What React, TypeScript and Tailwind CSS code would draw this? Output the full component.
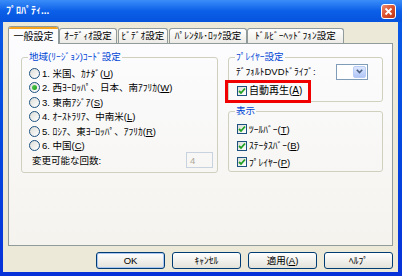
import React from "react";

function Radio({ checked }: { checked?: boolean }) {
  return (
    <span className="flex h-[11px] w-[11px] shrink-0 items-center justify-center rounded-full border border-[#1C5180] bg-gradient-to-br from-[#DCDCD7] to-white">
      {checked && <span className="h-[5px] w-[5px] rounded-full bg-gradient-to-br from-[#55D051] to-[#1A9B1A]" />}
    </span>
  );
}

function Check() {
  return (
    <span className="flex h-[10px] w-[10px] shrink-0 items-center justify-center border border-[#1C5180] bg-gradient-to-br from-[#DCDCD7] to-white">
      <svg width="8" height="8" viewBox="0 0 8 8">
        <path d="M1 4 L3 6 L7 1.5" fill="none" stroke="#21A121" strokeWidth="1.8" />
      </svg>
    </span>
  );
}

function Btn({ children, primary }: { children: React.ReactNode; primary?: boolean }) {
  return (
    <div
      className={
        primary
          ? "flex h-[17px] w-[69px] items-center justify-center rounded-[3px] border border-[#003C74] bg-gradient-to-b from-white to-[#E3E2DA] shadow-[inset_0_0_0_1px_#A9C6F3]"
          : "flex h-[17px] w-[69px] items-center justify-center rounded-[3px] border border-[#003C74] bg-gradient-to-b from-white to-[#E3E2DA]"
      }
    >
      {children}
    </div>
  );
}

export default function App() {
  const regions = [
    { n: "1. 米国、ｶﾅﾀﾞ(", k: "U", c: false },
    { n: "2. 西ﾖｰﾛｯﾊﾟ、日本、南ｱﾌﾘｶ(", k: "W", c: true },
    { n: "3. 東南ｱｼﾞｱ(", k: "S", c: false },
    { n: "4. ｵｰｽﾄﾗﾘｱ、中南米(", k: "L", c: false },
    { n: "5. ﾛｼｱ、東ﾖｰﾛｯﾊﾟ、ｱﾌﾘｶ(", k: "R", c: false },
    { n: "6. 中国(", k: "C", c: false },
  ];

  const views = [
    { n: "ﾂｰﾙﾊﾞｰ(", k: "T" },
    { n: "ｽﾃｰﾀｽﾊﾞｰ(", k: "B" },
    { n: "ﾌﾟﾚｲﾔｰ(", k: "P" },
  ];

  return (
    <div className="flex h-[276px] w-[402px] flex-col overflow-hidden bg-gradient-to-b from-[#0A5CE6] to-[#0831D9] font-['Liberation_Sans','Noto_Sans_CJK_JP',sans-serif] text-[9.5px] leading-none text-black">
      {/* title bar */}
      <div className="flex h-[22px] shrink-0 items-center justify-between bg-gradient-to-b from-[#3A8DF8] via-[#0B5FE8] to-[#0753DD] pl-[6px] pr-[6px]">
        <span className="text-[10px] font-bold text-white">ﾌﾟﾛﾊﾟﾃｨ...</span>
        <div className="flex h-[15px] w-[15px] items-center justify-center rounded-[3px] border border-white bg-gradient-to-br from-[#EE8A6E] via-[#D9502C] to-[#BF3412]">
          <svg width="9" height="9" viewBox="0 0 9 9">
            <path d="M1.5 1.5 L7.5 7.5 M7.5 1.5 L1.5 7.5" stroke="white" strokeWidth="1.8" />
          </svg>
        </div>
      </div>

      {/* body */}
      <div className="mb-[4px] ml-[3px] mr-[4px] flex flex-1 flex-col bg-[#ECE9D8] px-[5px] pt-[4px]">
        {/* tabs */}
        <div className="relative z-10 flex h-[17px] items-end">
          <div className="-mb-px flex h-[18px] w-[51px] flex-col overflow-hidden rounded-t-[3px] border border-b-0 border-[#919B9C] bg-[#FCFCFE]">
            <div className="h-[2px] bg-[#F4A31F]" />
            <div className="flex flex-1 items-center justify-center text-[10px]">一般設定</div>
          </div>
          <div className="flex h-[15px] w-[58px] items-center justify-center rounded-t-[3px] border border-b-0 border-[#919B9C] bg-gradient-to-b from-white to-[#ECEBE6]">ｵｰﾃﾞｨｵ設定</div>
          <div className="ml-[1px] flex h-[15px] w-[50px] items-center justify-center rounded-t-[3px] border border-b-0 border-[#919B9C] bg-gradient-to-b from-white to-[#ECEBE6]">ﾋﾞﾃﾞｵ設定</div>
          <div className="ml-[1px] flex h-[15px] w-[78px] items-center justify-center rounded-t-[3px] border border-b-0 border-[#919B9C] bg-gradient-to-b from-white to-[#ECEBE6]">ﾊﾟﾚﾝﾀﾙ･ﾛｯｸ設定</div>
          <div className="flex h-[15px] w-[97px] items-center justify-center rounded-t-[3px] border border-b-0 border-[#919B9C] bg-gradient-to-b from-white to-[#ECEBE6]">ﾄﾞﾙﾋﾞｰﾍｯﾄﾞﾌｫﾝ設定</div>
        </div>

        {/* panel */}
        <div className="flex h-[203px] shrink-0 gap-[10px] border border-[#919B9C] bg-gradient-to-b from-[#FCFCFE] to-[#F4F3EE] pl-[12px] pr-[10px] pt-[7px]">
          {/* region */}
          <fieldset className="h-[122px] w-[197px] shrink-0 rounded-[3px] border border-[#D0D0BF]">
            <legend className="ml-[6px] px-[1px] leading-[12px] text-[#0046D5]">地域(ﾘｰｼﾞｮﾝ)ｺｰﾄﾞ設定</legend>
            <div className="flex flex-col pl-[7px] pr-[4px] pt-[3px]">
              {regions.map((r) => (
                <div key={r.k} className="flex h-[14.5px] items-center gap-[2px]">
                  <Radio checked={r.c} />
                  <span>
                    {r.n}
                    <u>{r.k}</u>)
                  </span>
                </div>
              ))}
              <div className="flex h-[14.5px] items-center justify-between pl-[3px]">
                <span>変更可能な回数:</span>
                <div className="flex h-[16px] w-[27px] items-center border border-[#C9D3E0] pl-[3px] text-[#ACA899]">4</div>
              </div>
            </div>
          </fieldset>

          {/* right column */}
          <div className="flex w-[155px] shrink-0 flex-col gap-[3px]">
            <fieldset className="h-[51px] rounded-[3px] border border-[#D0D0BF]">
              <legend className="ml-[6px] px-[1px] leading-[12px] text-[#0046D5]">ﾌﾟﾚｲﾔｰ設定</legend>
              <div className="flex h-[16px] items-center justify-between pl-[7px] pr-[14px] pt-[1px]">
                <span>ﾃﾞﾌｫﾙﾄDVDﾄﾞﾗｲﾌﾞ:</span>
                <div className="flex h-[16px] w-[32px] justify-end border border-[#7F9DB9] bg-white p-[1px]">
                  <div className="flex w-[13px] items-center justify-center rounded-[2px] border border-[#B9CCF6] bg-gradient-to-b from-[#DDE7FE] to-[#B0C6F5]">
                    <svg width="7" height="5" viewBox="0 0 7 5">
                      <path d="M0.8 0.8 L3.5 3.6 L6.2 0.8" fill="none" stroke="#4D6185" strokeWidth="1.6" />
                    </svg>
                  </div>
                </div>
              </div>
              <div className="relative mt-[5px] flex h-[14px] items-center gap-[2px] pl-[8px]">
                <Check />
                <span className="text-[10px]">
                  自動再生(<u>A</u>)
                </span>
                <span className="absolute -left-[4px] -top-[4px] h-[23px] w-[86px] border-[3px] border-[#F00000]" />
              </div>
            </fieldset>

            <fieldset className="h-[67px] rounded-[3px] border border-[#D0D0BF]">
              <legend className="ml-[6px] px-[1px] leading-[12px] text-[#0046D5]">表示</legend>
              <div className="flex flex-col pl-[8px] pt-[4px]">
                {views.map((v) => (
                  <div key={v.k} className="flex h-[16.5px] items-center gap-[2px]">
                    <Check />
                    <span>
                      {v.n}
                      <u>{v.k}</u>)
                    </span>
                  </div>
                ))}
              </div>
            </fieldset>
          </div>
        </div>

        {/* buttons */}
        <div className="mt-[6px] flex justify-end gap-[7px]">
          <Btn primary>OK</Btn>
          <Btn>ｷｬﾝｾﾙ</Btn>
          <Btn>
            <span>
              適用(<u>A</u>)
            </span>
          </Btn>
          <Btn>ﾍﾙﾌﾟ</Btn>
        </div>
      </div>
    </div>
  );
}
